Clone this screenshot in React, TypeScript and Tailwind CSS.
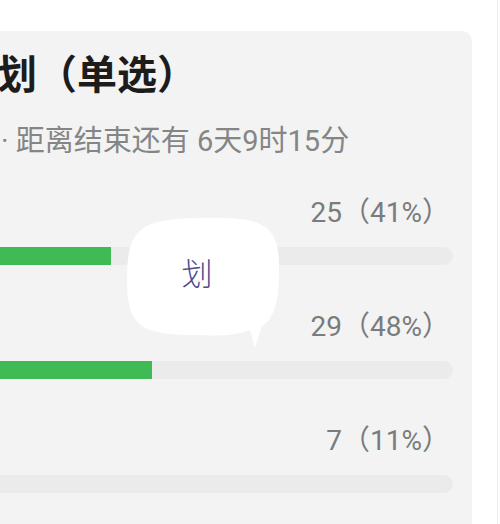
import React from 'react';

const rows = [
  { count: 25, pct: 41 },
  { count: 29, pct: 48 },
  { count: 7, pct: 11 },
];

const TRACK = 586;

const SpeechBubble: React.FC = () => (
  <div className="absolute left-[122px] top-[212px] w-[164px] h-[142px]">
    <svg width="164" height="142" viewBox="0 0 164 142" className="absolute inset-0">
      <path
        d="M 78 6 C 143 4 158 13 157 58 C 157 88 153 106 140 114 L 133 136 L 128 118 C 113 124 93 124 73 123 C 18 123 5 113 5 68 C 5 16 18 7 78 6 Z"
        fill="#ffffff"
      />
    </svg>
    <div className="absolute left-[59px] top-[40px] w-[32px] text-center text-[31px] leading-[40px] font-light text-[#4d4a8e] [font-family:'Noto_Sans_CJK_SC',sans-serif]">
      划
    </div>
  </div>
);

const App: React.FC = () => {
  return (
    <div className="relative w-[500px] h-[524px] overflow-hidden bg-white flex [font-family:Roboto,'Noto_Sans_CJK_SC',sans-serif]">
      {/* Poll card */}
      <div className="w-[472px] mt-[31px] bg-[#f3f3f3] rounded-tr-[10px] overflow-hidden pt-[17px]">
        <h2 className="-ml-[3px] text-[40px] leading-[48px] font-bold text-[#1c1c1c] whitespace-nowrap [font-family:'Noto_Sans_CJK_SC',sans-serif]">
          划（单选）
        </h2>
        <p className="mt-[26px] ml-[1px] text-[29px] leading-[38px] text-[#858585] whitespace-nowrap">
          · 距离结束还有 6天9时15分
        </p>

        <div className="mt-[35px] flex flex-col gap-[44px]">
          {rows.map((r) => (
            <div key={r.count} className="flex flex-col">
              <div className="pr-[22px] text-right text-[28px] leading-[36px] text-[#7b7b7b]">
                {r.count}（{r.pct}%）
              </div>
              <div className="mt-[16px] -ml-[129px] w-[582px] h-[18px] rounded-full bg-[#ebebeb] overflow-hidden">
                <div
                  className="h-full bg-[#3fba55]"
                  style={{ width: `${Math.round((TRACK * r.pct) / 100)}px` }}
                />
              </div>
            </div>
          ))}
        </div>
      </div>

      <div className="ml-auto mr-[2px] w-px bg-[#ececec]" />

      <SpeechBubble />
    </div>
  );
};

export default App;
